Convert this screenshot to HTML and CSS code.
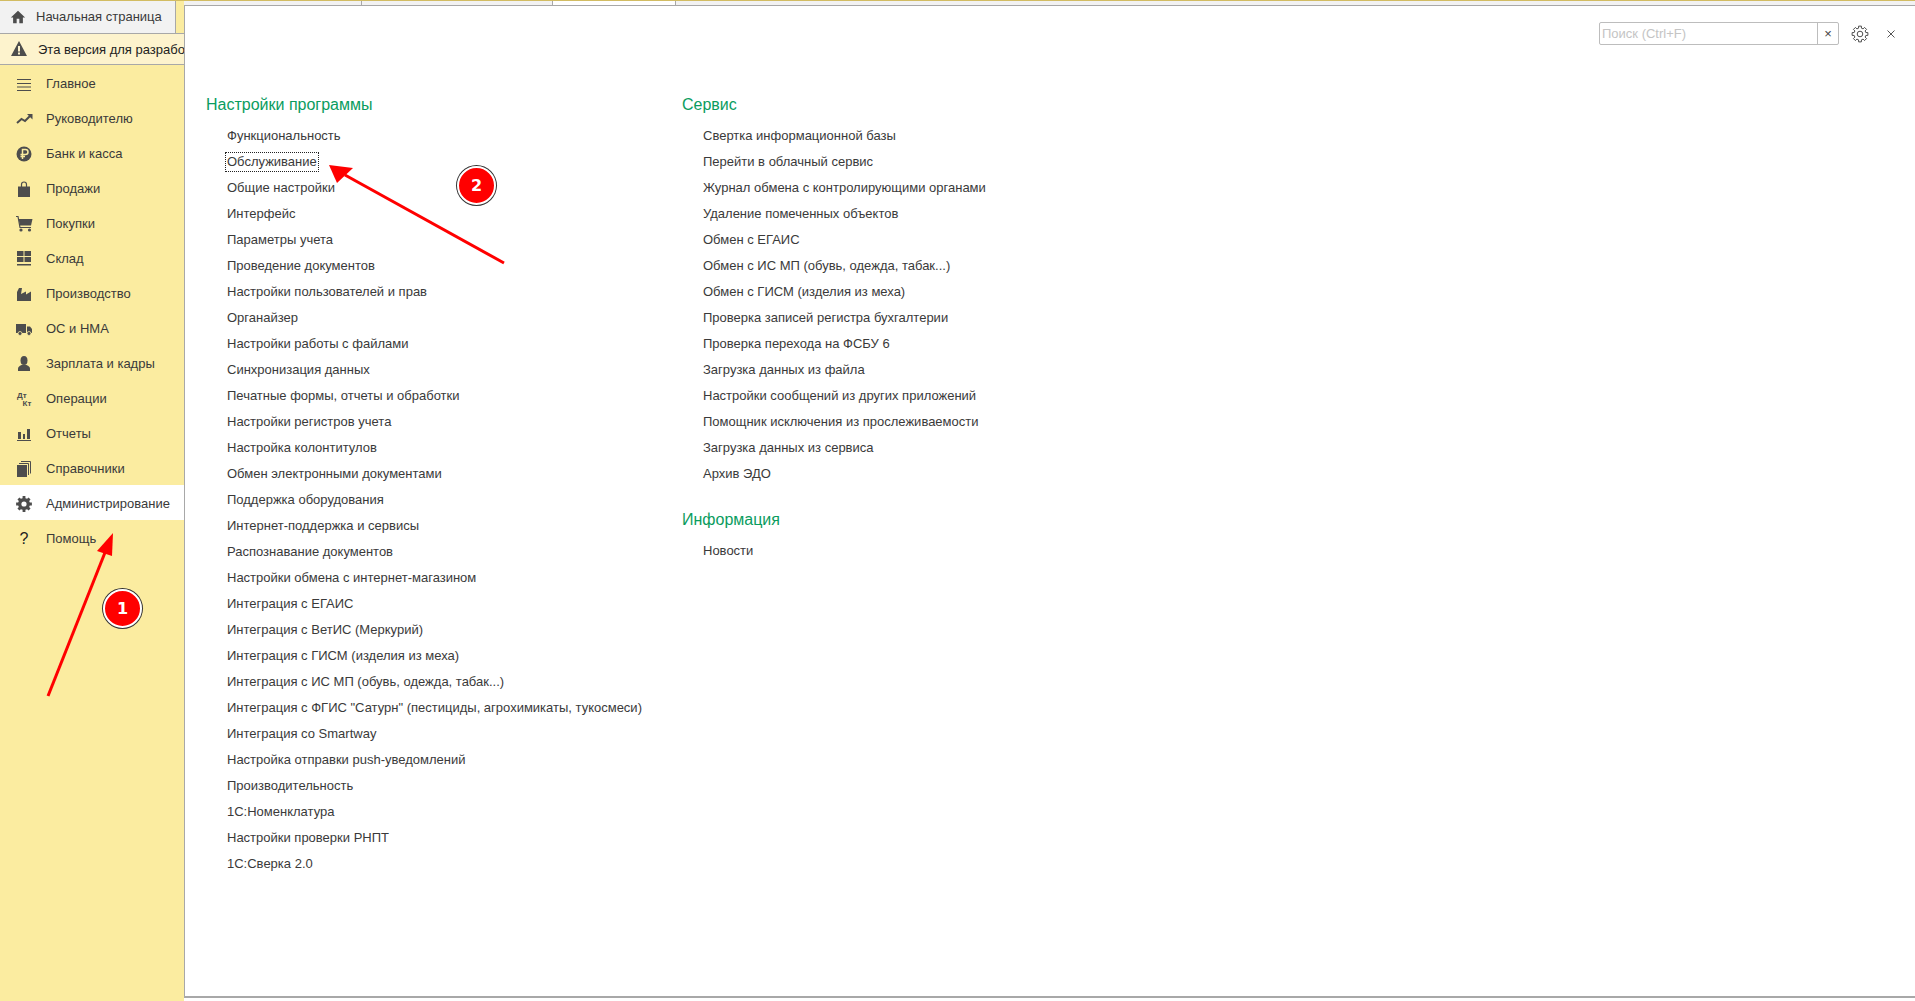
FILE: index.html
```html
<!DOCTYPE html>
<html lang="ru">
<head>
    <meta charset="UTF-8">
    <meta name="viewport" content="width=device-width, initial-scale=1.0">
    <title>Администрирование</title>
    <link rel="stylesheet" href="styles.css">
</head>
<body>
<div class="app">
    <aside class="sidebar">
        <div class="home-tab">
            <svg class="home-icon" viewBox="0 0 18 18"><path d="M9 2 L1 9.5 H3.5 V16 H7.5 V11 H10.5 V16 H14.5 V9.5 H17 Z"/></svg>
            <span>Начальная страница</span>
        </div>
        <div class="warning-bar">
            <svg class="warning-icon" viewBox="0 0 18 18"><path d="M9 1 L17 16 H1 Z"/><rect class="cut" x="8" y="6" width="2" height="5.5"/><rect class="cut" x="8" y="12.5" width="2" height="2"/></svg>
            <span>Эта версия для разработки</span>
        </div>
        <nav class="nav">
            <a class="nav-item">
                <svg class="nav-icon" viewBox="0 0 18 18"><path class="line" d="M2 4.5 H16 M2 8.5 H16 M2 12 H16 M2 15.5 H16"/></svg>
                Главное
            </a>
            <a class="nav-item">
                <svg class="nav-icon" viewBox="0 0 18 18"><path class="thick" d="M2 13 L6.5 9 L10 11 L15 6"/><path d="M12 4 H17.5 V9.5 Z"/></svg>
                Руководителю
            </a>
            <a class="nav-item">
                <svg class="nav-icon" viewBox="0 0 18 18"><circle cx="9" cy="9" r="7.5"/><path class="ruble" d="M7.5 14 V4.5 H10.5 A2.5 2.5 0 0 1 10.5 9.5 H5.5 M5.5 11.5 H10"/></svg>
                Банк и касса
            </a>
            <a class="nav-item">
                <svg class="nav-icon" viewBox="0 0 18 18"><path d="M3 6.5 H15 V17 H3 Z"/><path class="line" d="M6.5 9 V4.5 A2.5 2.5 0 0 1 11.5 4.5 V9"/></svg>
                Продажи
            </a>
            <a class="nav-item">
                <svg class="nav-icon" viewBox="0 0 18 18"><path d="M3.5 4 H17.5 L16 10.5 H5 Z"/><path class="line" d="M1 1.5 H3 L5 12.5 H16"/><circle cx="6" cy="15" r="1.6"/><circle cx="14.5" cy="15" r="1.6"/></svg>
                Покупки
            </a>
            <a class="nav-item">
                <svg class="nav-icon" viewBox="0 0 18 18"><path d="M2 1 H8.5 V6 H2 Z M9.5 1 H16 V6 H9.5 Z M2 7 H8.5 V12 H2 Z M9.5 7 H16 V12 H9.5 Z M2 14 H16 V15.5 H2 Z"/></svg>
                Склад
            </a>
            <a class="nav-item">
                <svg class="nav-icon" viewBox="0 0 18 18"><path d="M2 16 V7 L4 3 H7 L6 9 L11 6.5 V9.5 L16 6.5 V16 Z"/></svg>
                Производство
            </a>
            <a class="nav-item">
                <svg class="nav-icon" viewBox="0 0 18 18"><path d="M1 4 H11 V13 H1 Z M12 6.5 H15 L17 9 V13 H12 Z"/><circle class="wheel" cx="5" cy="13.5" r="2"/><circle class="wheel" cx="14" cy="13.5" r="2"/></svg>
                ОС и НМА
            </a>
            <a class="nav-item">
                <svg class="nav-icon" viewBox="0 0 18 18"><ellipse cx="9" cy="5.5" rx="3.5" ry="4.5"/><path d="M3 16 V13.5 Q3 11.5 6.5 10 H11.5 Q15 11.5 15 13.5 V16 Z"/></svg>
                Зарплата и кадры
            </a>
            <a class="nav-item">
                <svg class="nav-icon" viewBox="0 0 18 18"><text class="dk" x="2" y="8">Дт</text><text class="dk" x="7.5" y="16">Кт</text></svg>
                Операции
            </a>
            <a class="nav-item">
                <svg class="nav-icon" viewBox="0 0 18 18"><path d="M3 7 H6 V14 H3 Z M8 9 H10 V14 H8 Z M12 4 H15 V14 H12 Z M2 15 H16 V16 H2 Z"/></svg>
                Отчеты
            </a>
            <a class="nav-item">
                <svg class="nav-icon" viewBox="0 0 18 18"><path d="M2 5 H12 V17 H2 Z"/><path class="line-thin" d="M4 3.5 H13.5 V15 M6 1.5 H15.5 V13.5"/></svg>
                Справочники
            </a>
            <a class="nav-item nav-item-active">
                <svg class="nav-icon" viewBox="-9 -9 18 18"><polygon class="gear-fill" points="-1.45,-5.82 -1.39,-7.88 1.39,-7.88 1.45,-5.82 3.09,-5.14 4.59,-6.55 6.55,-4.59 5.14,-3.09 5.82,-1.45 7.88,-1.39 7.88,1.39 5.82,1.45 5.14,3.09 6.55,4.59 4.59,6.55 3.09,5.14 1.45,5.82 1.39,7.88 -1.39,7.88 -1.45,5.82 -3.09,5.14 -4.59,6.55 -6.55,4.59 -5.14,3.09 -5.82,1.45 -7.88,1.39 -7.88,-1.39 -5.82,-1.45 -5.14,-3.09 -6.55,-4.59 -4.59,-6.55 -3.09,-5.14"/><circle class="gear-hole" r="2.6"/></svg>
                Администрирование
            </a>
            <a class="nav-item">
                <span class="nav-icon help-icon">?</span>
                Помощь
            </a>
        </nav>
    </aside>

    <div class="workspace">
        <div class="tabs">
            <div class="tab tab-a"></div>
            <div class="tab tab-b"></div>
            <div class="tab tab-active"></div>
            <div class="tab tab-rest"></div>
        </div>
        <main class="panel">
            <div class="toolbar">
                <div class="search">
                    <input class="search-input" type="text" placeholder="Поиск (Ctrl+F)" aria-label="Поиск">
                    <button class="search-clear">&times;</button>
                </div>
                <svg class="tool-gear" viewBox="-10 -10 20 20"><polygon points="-1.45,-5.82 -1.39,-7.88 1.39,-7.88 1.45,-5.82 3.09,-5.14 4.59,-6.55 6.55,-4.59 5.14,-3.09 5.82,-1.45 7.88,-1.39 7.88,1.39 5.82,1.45 5.14,3.09 6.55,4.59 4.59,6.55 3.09,5.14 1.45,5.82 1.39,7.88 -1.39,7.88 -1.45,5.82 -3.09,5.14 -4.59,6.55 -6.55,4.59 -5.14,3.09 -5.82,1.45 -7.88,1.39 -7.88,-1.39 -5.82,-1.45 -5.14,-3.09 -6.55,-4.59 -4.59,-6.55 -3.09,-5.14"/><circle r="2.8"/></svg>
                <svg class="tool-close" viewBox="0 0 10 10"><path d="M1.5 1.5 L8.5 8.5 M8.5 1.5 L1.5 8.5"/></svg>
            </div>
            <div class="columns">
                <section class="column column-main">
                    <h2 class="group-title">Настройки программы</h2>
                    <a class="link">Функциональность</a>
                    <a class="link link-focus">Обслуживание</a>
                    <a class="link">Общие настройки</a>
                    <a class="link">Интерфейс</a>
                    <a class="link">Параметры учета</a>
                    <a class="link">Проведение документов</a>
                    <a class="link">Настройки пользователей и прав</a>
                    <a class="link">Органайзер</a>
                    <a class="link">Настройки работы с файлами</a>
                    <a class="link">Синхронизация данных</a>
                    <a class="link">Печатные формы, отчеты и обработки</a>
                    <a class="link">Настройки регистров учета</a>
                    <a class="link">Настройка колонтитулов</a>
                    <a class="link">Обмен электронными документами</a>
                    <a class="link">Поддержка оборудования</a>
                    <a class="link">Интернет-поддержка и сервисы</a>
                    <a class="link">Распознавание документов</a>
                    <a class="link">Настройки обмена с интернет-магазином</a>
                    <a class="link">Интеграция с ЕГАИС</a>
                    <a class="link">Интеграция с ВетИС (Меркурий)</a>
                    <a class="link">Интеграция с ГИСМ (изделия из меха)</a>
                    <a class="link">Интеграция с ИС МП (обувь, одежда, табак...)</a>
                    <a class="link">Интеграция с ФГИС "Сатурн" (пестициды, агрохимикаты, тукосмеси)</a>
                    <a class="link">Интеграция со Smartway</a>
                    <a class="link">Настройка отправки push-уведомлений</a>
                    <a class="link">Производительность</a>
                    <a class="link">1С:Номенклатура</a>
                    <a class="link">Настройки проверки РНПТ</a>
                    <a class="link">1С:Сверка 2.0</a>
                </section>
                <section class="column">
                    <h2 class="group-title">Сервис</h2>
                    <a class="link">Свертка информационной базы</a>
                    <a class="link">Перейти в облачный сервис</a>
                    <a class="link">Журнал обмена с контролирующими органами</a>
                    <a class="link">Удаление помеченных объектов</a>
                    <a class="link">Обмен с ЕГАИС</a>
                    <a class="link">Обмен с ИС МП (обувь, одежда, табак...)</a>
                    <a class="link">Обмен с ГИСМ (изделия из меха)</a>
                    <a class="link">Проверка записей регистра бухгалтерии</a>
                    <a class="link">Проверка перехода на ФСБУ 6</a>
                    <a class="link">Загрузка данных из файла</a>
                    <a class="link">Настройки сообщений из других приложений</a>
                    <a class="link">Помощник исключения из прослеживаемости</a>
                    <a class="link">Загрузка данных из сервиса</a>
                    <a class="link">Архив ЭДО</a>
                    <h2 class="group-title group-title-next">Информация</h2>
                    <a class="link">Новости</a>
                </section>
            </div>
        </main>
    </div>
</div>

<svg class="marks" viewBox="0 0 1915 1001">
    <path class="arrow-line" d="M48 696 L106 550"/>
    <path class="arrow-head" d="M113 533 L97 551 L112 556 Z"/>
    <path class="arrow-line" d="M504 263 L345 175"/>
    <path class="arrow-head" d="M329 165 L353 168 L337 183 Z"/>
</svg>
<div class="badge badge-one">1</div>
<div class="badge badge-two">2</div>
</body>
</html>
```

FILE: styles.css
```css
* {
    box-sizing: border-box;
}
html, body {
    height: 100%;
}
body {
    margin: 0;
    background-color: #fff;
    font-family: "Liberation Sans", Arial, sans-serif;
    font-size: 13px;
    color: #3a3a3a;
    overflow: hidden;
}
.app {
    display: flex;
    height: 100vh;
    border-top: 1px solid #d2bc62;
}

/* left column */
.sidebar {
    flex: 0 0 184px;
    width: 184px;
    display: flex;
    flex-direction: column;
    background-color: #fbeca0;
    overflow: hidden;
}
.home-tab {
    display: flex;
    align-items: center;
    height: 32px;
    width: 176px;
    padding-left: 10px;
    padding-bottom: 1px;
    background-color: #f2f2f2;
    border-right: 1px solid #a8a8a8;
    flex-shrink: 0;
}
.home-icon {
    width: 16px;
    height: 16px;
    margin-right: 10px;
    fill: #4d4d4d;
}
.warning-bar {
    display: flex;
    align-items: center;
    height: 32px;
    padding-left: 10px;
    flex-shrink: 0;
    white-space: nowrap;
    color: #222;
    background-color: #fdf3cd;
    border-top: 1px solid #a8a8a8;
    border-bottom: 1px solid #a8a8a8;
}
.warning-icon {
    width: 18px;
    height: 18px;
    margin-right: 10px;
    flex-shrink: 0;
    fill: #4d4d4d;
}
.warning-icon .cut {
    fill: #fdf3cd;
}
.nav {
    display: flex;
    flex-direction: column;
}
.nav-item {
    display: flex;
    align-items: center;
    gap: 13px;
    height: 35px;
    padding-left: 15px;
    padding-top: 2px;
}
.nav-item-active {
    background-color: #fff;
}
.nav-icon {
    width: 18px;
    height: 18px;
    flex-shrink: 0;
    fill: #4d4d4d;
}
.nav-icon .line {
    fill: none;
    stroke: #4d4d4d;
    stroke-width: 1.2;
}
.nav-icon .line-thin {
    fill: none;
    stroke: #4d4d4d;
    stroke-width: 1;
}
.nav-icon .thick {
    fill: none;
    stroke: #4d4d4d;
    stroke-width: 2;
}
.nav-icon .ruble {
    fill: none;
    stroke: #fbeca0;
    stroke-width: 1.5;
}
.nav-icon .wheel {
    stroke: #fbeca0;
    stroke-width: 0.8;
}
.nav-icon .dk {
    font-size: 8px;
    font-weight: bold;
}
.nav-icon .gear-hole {
    fill: #fff;
}
.help-icon {
    font-size: 16px;
    line-height: 18px;
    text-align: center;
    color: #222;
}

/* right side */
.workspace {
    flex: 1;
    display: flex;
    flex-direction: column;
    min-width: 0;
    height: 997px;
}
.tabs {
    display: flex;
    height: 4px;
    background-color: #f2f2f2;
}
.tab {
    height: 4px;
    border-right: 1px solid #a8a8a8;
}
.tab-a {
    width: 178px;
}
.tab-b {
    width: 191px;
}
.tab-active {
    width: 123px;
    background-color: #fff;
}
.tab-rest {
    flex: 1;
    border-right: none;
}
.panel {
    flex: 1;
    background-color: #fff;
    border-top: 1px solid #a8a8a8;
    border-left: 1px solid #a8a8a8;
    border-bottom: 2px solid #a8a8a8;
}
.toolbar {
    display: flex;
    justify-content: flex-end;
    align-items: center;
    height: 23px;
    margin-top: 16px;
    padding-right: 19px;
}
.search {
    display: flex;
    width: 240px;
    height: 23px;
    border: 1px solid #bdbdbd;
    border-radius: 2px;
}
.search-input {
    flex: 1;
    min-width: 0;
    padding: 0 2px;
    border: none;
    outline: none;
    background: none;
    font-family: inherit;
    font-size: 13px;
}
.search-input::placeholder {
    color: #c4c4c4;
    opacity: 1;
}
.search-clear {
    width: 21px;
    padding: 0;
    border: none;
    border-left: 1px solid #bdbdbd;
    background: none;
    color: #444;
    font-family: inherit;
    font-size: 13px;
}
.tool-gear {
    width: 20px;
    height: 20px;
    margin-left: 11px;
    fill: none;
    stroke: #4d4d4d;
    stroke-width: 1;
    stroke-linejoin: round;
}
.tool-close {
    width: 10px;
    height: 10px;
    margin-left: 16px;
    fill: none;
    stroke: #555;
    stroke-width: 1;
}
.columns {
    display: flex;
    padding: 47px 0 0 21px;
}
.column {
    display: flex;
    flex-direction: column;
    align-items: flex-start;
}
.column-main {
    width: 476px;
}
.group-title {
    margin: 0 0 5px;
    font-size: 16px;
    font-weight: normal;
    line-height: 26px;
    color: #0a9c5e;
}
.group-title-next {
    margin-top: 20px;
}
.link {
    margin-left: 21px;
    line-height: 26px;
    white-space: nowrap;
}
.link-focus {
    position: relative;
}
.link-focus::after {
    content: "";
    position: absolute;
    left: -2px;
    right: -2px;
    top: 3px;
    bottom: 3px;
    border: 1px dotted #222;
}

/* annotations drawn over the screen */
.marks {
    position: absolute;
    left: 0;
    top: 0;
    width: 1915px;
    height: 1001px;
    pointer-events: none;
}
.arrow-line {
    fill: none;
    stroke: #f00;
    stroke-width: 3;
}
.arrow-head {
    fill: #f00;
}
.badge {
    position: absolute;
    width: 39px;
    height: 39px;
    border-radius: 50%;
    background-color: #f00;
    border: 2px solid #fff;
    box-shadow: 0 0 0 1px #333;
    color: #fff;
    font-family: "DejaVu Sans", sans-serif;
    font-size: 16px;
    font-weight: bold;
    line-height: 35px;
    text-align: center;
}
.badge-one {
    left: 103px;
    top: 589px;
}
.badge-two {
    left: 457px;
    top: 166px;
}
```
